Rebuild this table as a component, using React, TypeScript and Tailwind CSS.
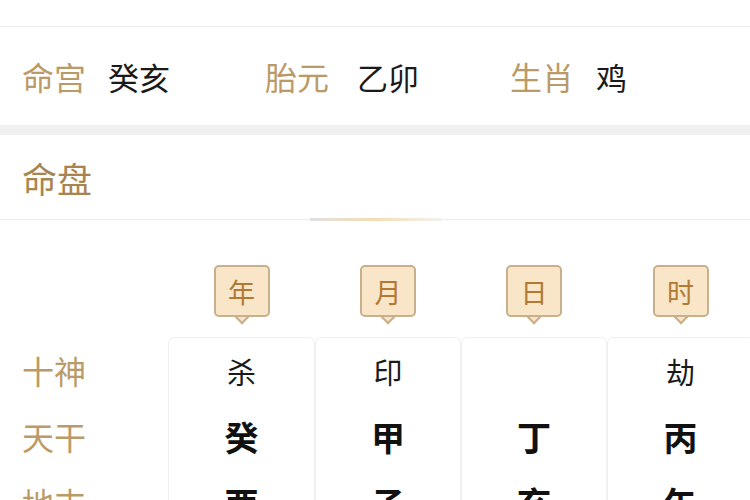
const FONT = "font-['Noto_Sans_CJK_SC','Noto_Sans',sans-serif]";

const INFO = [
  { label: "命宫", value: "癸亥", w: "w-[243px]", gap: "gap-[22px]" },
  { label: "胎元", value: "乙卯", w: "w-[245px]", gap: "gap-[28px]" },
  { label: "生肖", value: "鸡", w: "w-[200px]", gap: "gap-[22px]" },
];

const PILLARS = ["年", "月", "日", "时"];

const ROWS = [
  { label: "十神", cells: ["杀", "印", "", "劫"], bold: false },
  { label: "天干", cells: ["癸", "甲", "丁", "丙"], bold: true },
  { label: "地支", cells: ["酉", "子", "亥", "午"], bold: true },
];

function Badge({ text }: { text: string }) {
  return (
    <div className="relative flex flex-col items-center">
      <div className="relative z-10 flex h-[52px] w-[56px] items-center justify-center rounded-[5px] border-2 border-[#c9b08c] bg-[#f9e6c9] text-[27px] leading-none text-[#b07a33]">
        {text}
      </div>
      <div className="-mt-[7px] h-[12px] w-[12px] rotate-45 border-b-2 border-r-2 border-[#c9b08c] bg-[#f9e6c9]" />
    </div>
  );
}

export default function App() {
  return (
    <div className={`${FONT} relative h-[500px] w-[750px] overflow-hidden bg-white`}>
      <div className="h-[27px] border-b border-[#eeeeee]" />

      {/* 命宫 / 胎元 / 生肖 */}
      <div className="flex h-[98px] items-center pl-[22px]">
        {INFO.map((it) => (
          <div key={it.label} className={`flex items-center ${it.gap} ${it.w}`}>
            <span className="text-[32px] leading-none text-[#bb9a68]">{it.label}</span>
            <span className="text-[31px] leading-none text-[#1a1a1a]">{it.value}</span>
          </div>
        ))}
      </div>

      <div className="h-[10px] bg-[#f0f0f0]" />

      {/* 命盘 header */}
      <div className="relative flex h-[85px] items-center border-b border-[#ececec] pl-[22px]">
        <span className="text-[35px] leading-none text-[#a8854f]">命盘</span>
        <div className="absolute -bottom-[2px] left-[310px] h-[3px] w-[132px] bg-gradient-to-r from-[#e0e0e0] via-[#f4ddb4] to-[#f2f2f2]" />
      </div>

      {/* pillar badges */}
      <div className="grid h-[117px] grid-cols-[168px_147px_146px_146px_147px] items-end pb-[15px]">
        <div />
        {PILLARS.map((p) => (
          <div key={p} className="flex justify-center">
            <Badge text={p} />
          </div>
        ))}
      </div>

      {/* table */}
      <div className="grid grid-cols-[168px_147px_146px_146px_147px]">
        <div className="flex flex-col">
          {ROWS.map((r) => (
            <div key={r.label} className="flex h-[66px] items-center pl-[22px]">
              <span className="text-[32px] leading-none text-[#bb9a68]">{r.label}</span>
            </div>
          ))}
        </div>
        {PILLARS.map((p, ci) => (
          <div
            key={p}
            className="flex flex-col rounded-t-[6px] border-x border-t border-[#f0f0f0]"
          >
            {ROWS.map((r) => (
              <div key={r.label} className="flex h-[66px] items-center justify-center">
                <span
                  className={
                    r.bold
                      ? "text-[34px] font-bold leading-none text-[#111111]"
                      : "text-[29px] leading-none text-[#1a1a1a]"
                  }
                >
                  {r.cells[ci]}
                </span>
              </div>
            ))}
          </div>
        ))}
      </div>
    </div>
  );
}
